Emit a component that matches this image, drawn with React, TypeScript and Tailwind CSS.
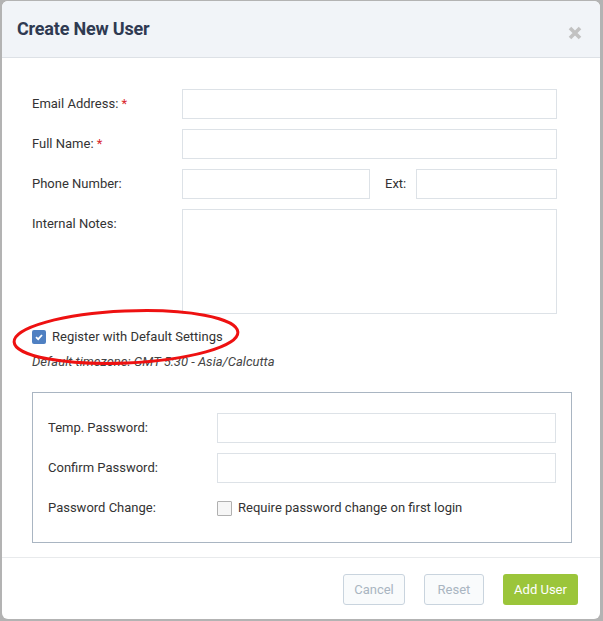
import React from "react";

const font = { fontFamily: "Roboto, 'Noto Sans', Arial, sans-serif" };

export default function App() {
  return (
    <div className="w-[603px] h-[621px] bg-[#b3b3b3] pl-[2px] pt-[1px] overflow-hidden" style={font}>
      <div className="relative w-[598px] h-[618px] rounded-[6px] bg-white overflow-hidden">
        {/* Header */}
        <div className="h-[57px] bg-[#f1f4f8] border-b border-[#dde1e6] flex items-center justify-between pl-[15px] pr-[18px]">
          <div className="text-[18px] font-bold text-[#2f3a52] tracking-[-0.2px] mt-[-1px]">Create New User</div>
          <svg width="14" height="14" viewBox="0 0 14 14" className="mt-[8px]">
            <path d="M2 2 L12 12 M12 2 L2 12" stroke="#c2c2c2" strokeWidth="3.6" strokeLinecap="butt" />
          </svg>
        </div>

        {/* Body */}
        <div className="pl-[30px] pt-[31px] pb-[14px] text-[13px] text-[#333]">
          <div className="flex items-center h-[30px]">
            <div className="w-[150px]">
              Email Address: <span className="text-[#d9262c]">*</span>
            </div>
            <div className="w-[375px] h-[30px] border border-[#dde2e7]" />
          </div>
          <div className="flex items-center h-[30px] mt-[10px]">
            <div className="w-[150px]">
              Full Name: <span className="text-[#d9262c]">*</span>
            </div>
            <div className="w-[375px] h-[30px] border border-[#dde2e7]" />
          </div>
          <div className="flex items-center h-[30px] mt-[10px]">
            <div className="w-[150px]">Phone Number:</div>
            <div className="w-[188px] h-[30px] border border-[#dde2e7]" />
            <div className="w-[46px] pl-[15px]">Ext:</div>
            <div className="w-[141px] h-[30px] border border-[#dde2e7]" />
          </div>
          <div className="flex items-start mt-[10px]">
            <div className="w-[150px] pt-[5px]">Internal Notes:</div>
            <div className="w-[375px] h-[105px] border border-[#dde2e7]" />
          </div>

          <div className="flex items-center mt-[16px] h-[14px]">
            <div className="w-[14px] h-[14px] rounded-[2px] bg-[#4f80c2] flex items-center justify-center">
              <svg width="10" height="10" viewBox="0 0 10 10">
                <path d="M2 5.2 L4.2 7.2 L8 3" stroke="white" strokeWidth="1.8" fill="none" />
              </svg>
            </div>
            <span className="ml-[6px] text-[13px] text-[#333]">Register with Default Settings</span>
          </div>
          <div className="mt-[10px] text-[13px] italic text-[#444] leading-[16px]">
            Default timezone: GMT 5:30 - Asia/Calcutta
          </div>

          <div className="mt-[22px] w-[540px] border border-[#a9b5c2] pl-[15px] pt-[20px] pb-[27px]">
            <div className="flex items-center h-[30px]">
              <div className="w-[169px]">Temp. Password:</div>
              <div className="w-[339px] h-[30px] border border-[#dde2e7]" />
            </div>
            <div className="flex items-center h-[30px] mt-[10px]">
              <div className="w-[169px]">Confirm Password:</div>
              <div className="w-[339px] h-[30px] border border-[#dde2e7]" />
            </div>
            <div className="flex items-center h-[14px] mt-[18px]">
              <div className="w-[169px]">Password Change:</div>
              <div className="w-[15px] h-[15px] border border-[#b0b0b0] bg-[#f6f6f6] rounded-[1px]" />
              <span className="ml-[6px]">Require password change on first login</span>
            </div>
          </div>
        </div>

        {/* Footer */}
        <div className="border-t border-[#e8eaec] pt-[16px] pr-[22px] flex justify-end gap-[19px]">
          <button className="w-[62px] h-[31px] rounded-[3px] border border-[#c9d4de] bg-[#f9fbfc] text-[#a9b5c1] text-[13px]">
            Cancel
          </button>
          <button className="w-[60px] h-[31px] rounded-[3px] border border-[#c9d4de] bg-[#f9fbfc] text-[#a9b5c1] text-[13px]">
            Reset
          </button>
          <button className="w-[75px] h-[31px] rounded-[3px] bg-[#9bc53a] text-white text-[13px]">
            Add User
          </button>
        </div>

        {/* Red annotation ellipse */}
        <svg className="absolute left-0 top-0 pointer-events-none" width="598" height="618">
          <ellipse cx="124" cy="336" rx="112" ry="26" fill="none" stroke="#ee1111" strokeWidth="3" transform="rotate(-2.5 124 336)" />
        </svg>
      </div>
    </div>
  );
}
